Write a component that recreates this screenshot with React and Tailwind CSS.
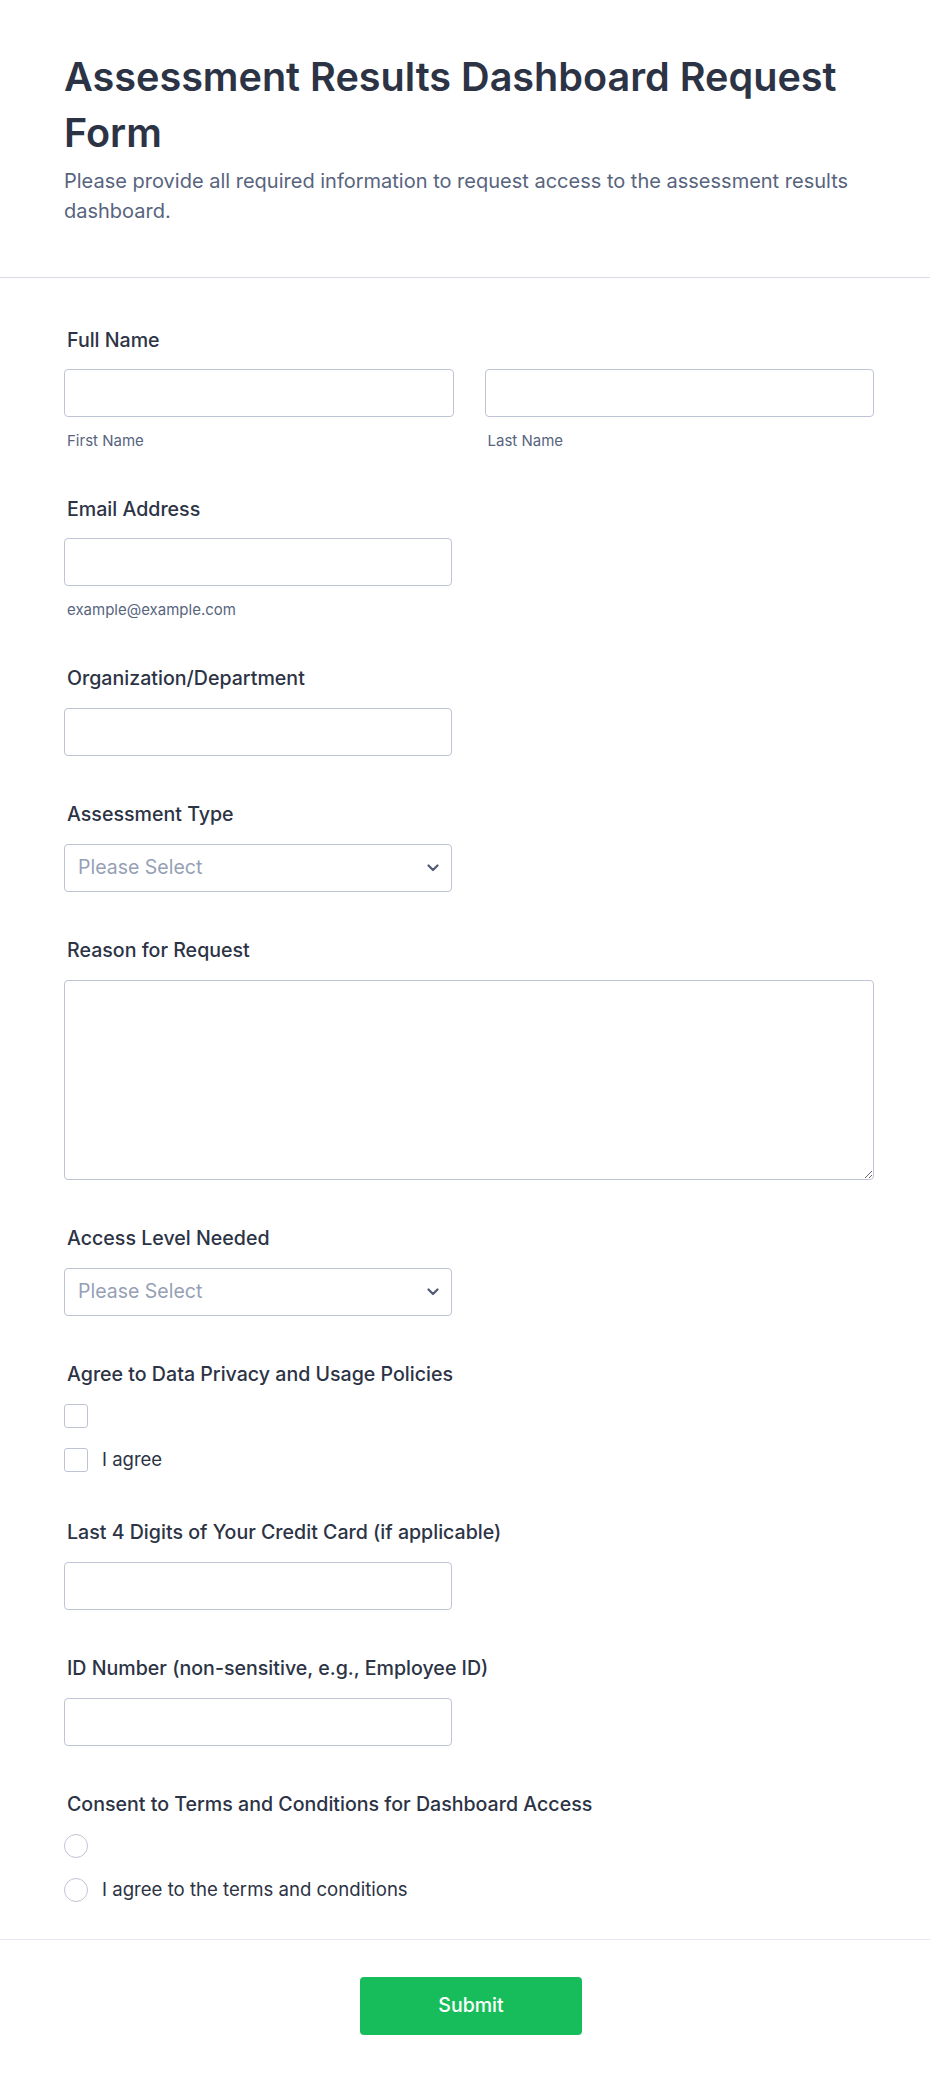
import React from 'react';

function Label({ children }) {
  return <label className="block pl-[3px] text-[19.6px] leading-[24px] font-medium text-[#2c3345]">{children}</label>;
}

function TextInput({ className = '' }) {
  return (
    <input
      type="text"
      className={`block h-[48px] rounded-[4px] border border-[#bfc4d4] bg-white px-3 text-[19px] text-[#2c3345] outline-none ${className}`}
    />
  );
}

function SelectBox() {
  return (
    <div className="relative mt-[18px] w-[388px]">
      <select className="block h-[48px] w-full appearance-none rounded-[4px] border border-[#bfc4d4] bg-white pl-[13px] pr-10 text-[19.5px] text-[#95a0b5] outline-none">
        <option>Please Select</option>
      </select>
      <svg className="pointer-events-none absolute right-[13px] top-[20px]" width="12" height="8" viewBox="0 0 12 8" fill="none">
        <polyline points="1.5,1.5 6,6 10.5,1.5" stroke="#4f5b73" strokeWidth="2.2" strokeLinecap="round" strokeLinejoin="round" />
      </svg>
    </div>
  );
}

export default function App() {
  return (
    <div className="min-h-screen bg-white font-[Inter,sans-serif]">
      {/* Header */}
      <header className="border-b border-[#d8dbe6] pl-[64px] pr-[56px] pt-[49px] pb-[51px]">
        <h1 className="text-[39.6px] leading-[56px] font-semibold text-[#2c3345]">
          Assessment Results Dashboard Request Form
        </h1>
        <p className="mt-[5px] text-[20px] leading-[30px] text-[#57647e]">
          Please provide all required information to request access to the assessment results dashboard.
        </p>
      </header>

      {/* Fields */}
      <form className="flex flex-col gap-[46px] pl-[64px] pr-[56px] pt-[50px] pb-[35px]" onSubmit={(e) => e.preventDefault()}>
        <div>
          <Label>Full Name</Label>
          <div className="mt-[17px] grid grid-cols-2 gap-[31px]">
            <div>
              <TextInput className="w-full" />
              <p className="mt-[14px] pl-[3px] text-[15px] leading-[20px] text-[#57647e]">First Name</p>
            </div>
            <div>
              <TextInput className="w-full" />
              <p className="mt-[14px] pl-[3px] text-[15px] leading-[20px] text-[#57647e]">Last Name</p>
            </div>
          </div>
        </div>

        <div>
          <Label>Email Address</Label>
          <TextInput className="mt-[17px] w-[388px]" />
          <p className="mt-[14px] pl-[3px] text-[15px] leading-[20px] text-[#57647e]">example@example.com</p>
        </div>

        <div>
          <Label>Organization/Department</Label>
          <TextInput className="mt-[18px] w-[388px]" />
        </div>

        <div>
          <Label>Assessment Type</Label>
          <SelectBox />
        </div>

        <div>
          <Label>Reason for Request</Label>
          <textarea className="mt-[18px] block h-[200px] w-full rounded-[4px] border border-[#bfc4d4] bg-white px-3 py-2 text-[19px] text-[#2c3345] outline-none" />
        </div>

        <div>
          <Label>Access Level Needed</Label>
          <SelectBox />
        </div>

        <div>
          <Label>Agree to Data Privacy and Usage Policies</Label>
          <div className="mt-4 flex flex-col gap-4">
            <div className="flex h-[28px] items-center">
              <span className="h-6 w-6 rounded-[3px] border border-[#bfc4d4] bg-white" />
            </div>
            <div className="flex h-[28px] items-center gap-[14px]">
              <span className="h-6 w-6 rounded-[3px] border border-[#bfc4d4] bg-white" />
              <span className="text-[18.5px] text-[#2c3345]">I agree</span>
            </div>
          </div>
        </div>

        <div>
          <Label>Last 4 Digits of Your Credit Card (if applicable)</Label>
          <TextInput className="mt-[18px] w-[388px]" />
        </div>

        <div>
          <Label>ID Number (non-sensitive, e.g., Employee ID)</Label>
          <TextInput className="mt-[18px] w-[388px]" />
        </div>

        <div>
          <Label>Consent to Terms and Conditions for Dashboard Access</Label>
          <div className="mt-4 flex flex-col gap-4">
            <div className="flex h-[28px] items-center">
              <span className="h-6 w-6 rounded-full border border-[#bfc4d4] bg-white" />
            </div>
            <div className="flex h-[28px] items-center gap-[14px]">
              <span className="h-6 w-6 rounded-full border border-[#bfc4d4] bg-white" />
              <span className="text-[18.6px] text-[#2c3345]">I agree to the terms and conditions</span>
            </div>
          </div>
        </div>
      </form>

      {/* Footer */}
      <div className="flex justify-center border-t border-[#e8e9f0] pl-[68px] pr-[56px] pt-[37px] pb-[52px]">
        <button className="h-[58px] w-[222px] rounded-[4px] bg-[#18bd5b] text-[19.5px] font-medium text-white">
          Submit
        </button>
      </div>
    </div>
  );
}
